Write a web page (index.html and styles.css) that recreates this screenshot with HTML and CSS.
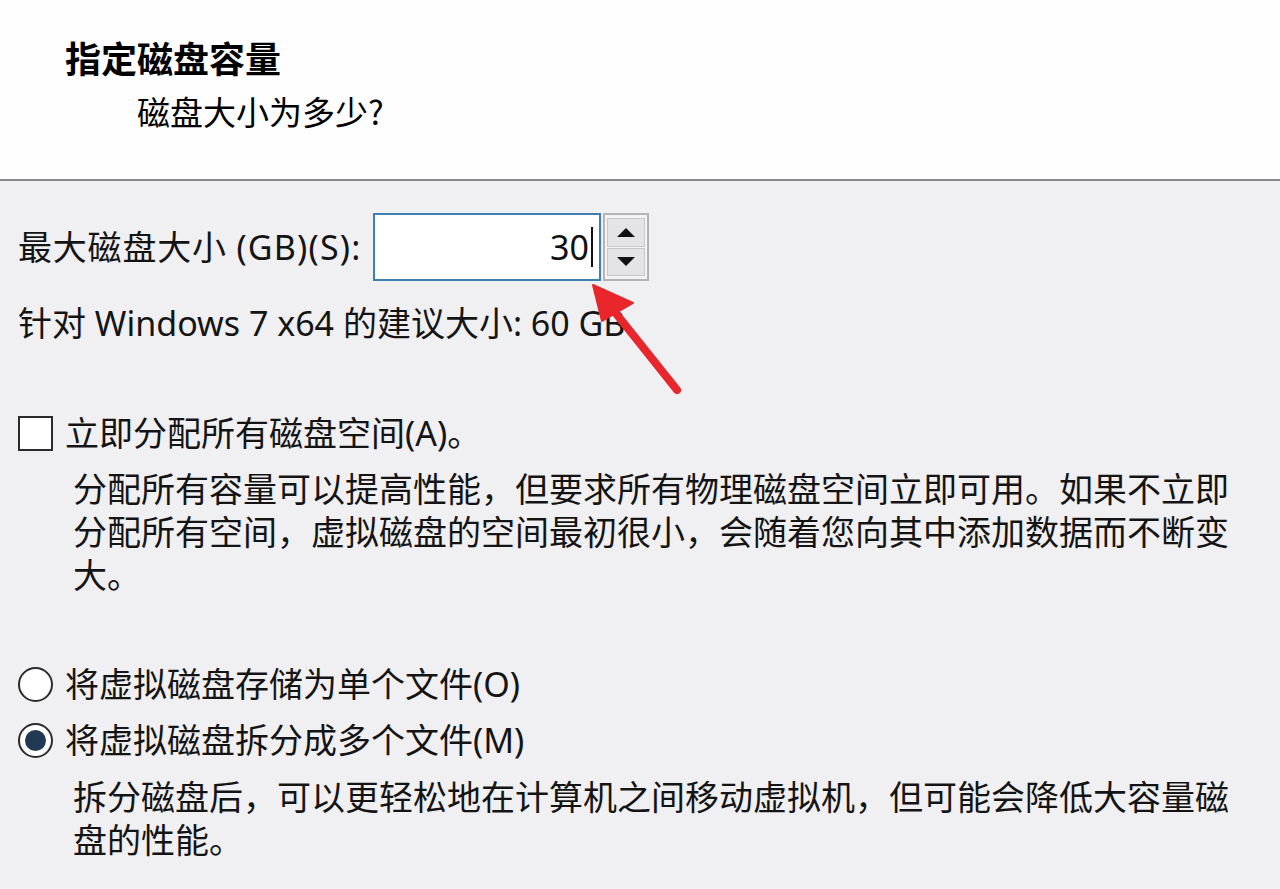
FILE: index.html
```html
<!DOCTYPE html>
<html lang="zh-CN">
<head>
<meta charset="utf-8">
<title>指定磁盘容量</title>
<link rel="stylesheet" href="styles.css">
</head>
<body>
<header class="head">
  <div class="title">指定磁盘容量</div>
  <div class="subtitle">磁盘大小为多少?</div>
</header>
<main class="content">
  <div class="size-row">
    <label class="size-label">最大磁盘大小 <span class="latin">(GB)(S):</span></label>
    <div class="input-box"><span class="value">30</span><span class="caret"></span></div>
    <div class="spinner">
      <div class="spin-btn up"><span class="tri-up"></span></div>
      <div class="spin-btn down"><span class="tri-down"></span></div>
    </div>
  </div>
  <div class="recommend">针对 Windows 7 x64 的建议大小: 60 GB</div>

  <div class="option check-row">
    <span class="checkbox"></span>
    <span class="opt-label">立即分配所有磁盘空间(A)。</span>
  </div>
  <p class="desc">分配所有容量可以提高性能，但要求所有物理磁盘空间立即可用。如果不立即分配所有空间，虚拟磁盘的空间最初很小，会随着您向其中添加数据而不断变大。</p>

  <div class="option radio-row first">
    <span class="radio"></span>
    <span class="opt-label">将虚拟磁盘存储为单个文件(O)</span>
  </div>
  <div class="option radio-row second">
    <span class="radio checked"></span>
    <span class="opt-label">将虚拟磁盘拆分成多个文件(M)</span>
  </div>
  <p class="desc split">拆分磁盘后，可以更轻松地在计算机之间移动虚拟机，但可能会降低大容量磁盘的性能。</p>
</main>
<svg class="arrow" width="110" height="130" viewBox="0 0 110 130" xmlns="http://www.w3.org/2000/svg">
  <line x1="97" y1="120" x2="30" y2="36" stroke="#e8262b" stroke-width="8" stroke-linecap="round"/>
  <polygon points="13,15 53,33 22,51" fill="#e8262b" stroke="#e8262b" stroke-width="2" stroke-linejoin="round"/>
</svg>
</body>
</html>
```

FILE: styles.css
```css
html, body {
  margin: 0;
  padding: 0;
}
body {
  background: #f0eff2;
  color: #141414;
  font-family: "Noto Sans", "Noto Sans CJK SC", sans-serif;
  font-size: 34px;
  line-height: 43px;
  position: relative;
  width: 1280px;
  height: 889px;
  overflow: hidden;
}
.head {
  background: #fefdff;
  height: 179px;
  border-bottom: 2px solid #8a8a8c;
  box-sizing: content-box;
  padding: 0;
}
.title {
  font-family: "Noto Sans CJK SC", sans-serif;
  font-weight: 700;
  font-size: 36px;
  line-height: 43px;
  color: #000;
  padding: 36px 0 0 65px;
}
.subtitle {
  font-family: "Noto Sans CJK SC", sans-serif;
  font-size: 33px;
  line-height: 43px;
  color: #000;
  padding: 11px 0 0 137px;
}
.content {
  padding: 32px 0 0 18px;
}
.size-row {
  display: flex;
  align-items: center;
  height: 68px;
}
.size-label {
  width: 355px;
  flex: none;
  letter-spacing: 0.8px;
}
.latin {
  letter-spacing: 1.2px;
}
.input-box {
  width: 228px;
  height: 68px;
  box-sizing: border-box;
  border: 2px solid #3d7fb3;
  background: #fff;
  display: flex;
  align-items: center;
  justify-content: flex-end;
  padding-right: 6px;
  flex: none;
}
.value {
  font-family: "Noto Sans", sans-serif;
  font-size: 34px;
  line-height: 40px;
  color: #111;
}
.caret {
  width: 2px;
  height: 40px;
  background: #111;
  margin-left: 2px;
}
.spinner {
  width: 46px;
  height: 68px;
  box-sizing: border-box;
  margin-left: 2px;
  border: 2px solid #b4b4b6;
  background: #f3f3f3;
  padding: 3px 2px;
  display: flex;
  flex-direction: column;
  gap: 1px;
  flex: none;
}
.spin-btn {
  flex: 1;
  background: #e4e4e6;
  border: 1px solid #c8c8ca;
  display: flex;
  align-items: center;
  justify-content: center;
}
.tri-up {
  width: 0;
  height: 0;
  border-left: 9px solid transparent;
  border-right: 9px solid transparent;
  border-bottom: 9px solid #111;
}
.tri-down {
  width: 0;
  height: 0;
  border-left: 9px solid transparent;
  border-right: 9px solid transparent;
  border-top: 9px solid #111;
}
.recommend {
  margin-top: 21px;
}
.option {
  display: flex;
  align-items: center;
  gap: 12px;
  height: 43px;
}
.check-row {
  margin-top: 67px;
}
.checkbox {
  width: 35px;
  height: 35px;
  box-sizing: border-box;
  border: 2px solid #2b2b2b;
  background: #fff;
  flex: none;
}
.desc {
  margin: 13px 0 0 55px;
  width: 1180px;
  line-break: strict;
}
.radio-row.first {
  margin-top: 66px;
}
.radio-row.second {
  margin-top: 13px;
}
.radio {
  width: 35px;
  height: 35px;
  box-sizing: border-box;
  border: 2px solid #2b2b2b;
  border-radius: 50%;
  background: #fff;
  flex: none;
  display: flex;
  align-items: center;
  justify-content: center;
}
.radio.checked::after {
  content: "";
  width: 21px;
  height: 21px;
  border-radius: 50%;
  background: #1f3a52;
}
.desc.split {
  margin-top: 14px;
}
.arrow {
  position: absolute;
  left: 580px;
  top: 280px;
  top: 270px;
}
```
